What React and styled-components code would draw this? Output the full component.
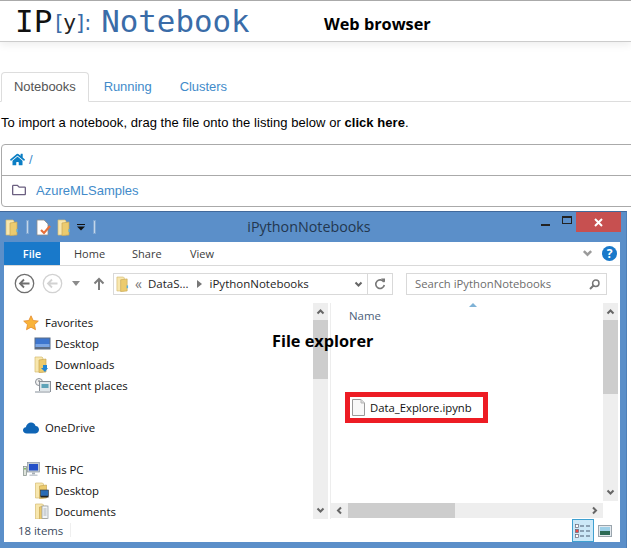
import React from 'react'
import styled, { createGlobalStyle } from 'styled-components'
import { FaHome, FaRegFolder } from 'react-icons/fa'

const GlobalStyle = createGlobalStyle`
  html, body { margin: 0; padding: 0; background: #fff; }
  body { width: 631px; height: 548px; overflow: hidden; font-family: "Liberation Sans", Arial, sans-serif; }
`

const Page = styled.div`
  position: relative;
  width: 631px;
  height: 548px;
  overflow: hidden;
`

const Annotation = styled.div`
  position: absolute;
  left: ${p => p.$left}px;
  top: ${p => p.$top}px;
  font: 700 16.3px/20px "Open Sans", sans-serif;
  color: #000;
  white-space: nowrap;
`

const Header = styled.header`
  height: 40px;
  border-top: 1px solid #aaa;
  border-bottom: 1px solid #ccc;
  box-shadow: 0 3px 8px rgba(0, 0, 0, 0.07);
  padding-left: 15px;
  display: flex;
  align-items: center;
  font-family: "DejaVu Sans Mono", monospace;
`

const LogoIp = styled.span`
  font-size: 31px;
  line-height: 40px;
  color: #111;
  margin-right: 3px;
`

const LogoBracket = styled.span`
  font-family: "DejaVu Sans", sans-serif;
  font-size: 21px;
  line-height: 40px;
  color: ${p => p.$dark ? '#222' : '#3a6ca8'};
  margin-top: 3px;
`

const LogoName = styled.span`
  font-size: 30.8px;
  line-height: 40px;
  color: #3a6ca8;
  margin-left: 10px;
`

const Tabs = styled.nav`
  margin-top: 30px;
  height: 29px;
  padding-left: 1px;
  border-bottom: 1px solid #ddd;
  display: flex;
  gap: 2px;
`

const Tab = styled.div`
  height: 28px;
  padding: 0 12px;
  font-size: 13px;
  letter-spacing: -0.06px;
  line-height: 28px;
  border: 1px solid ${p => p.$active ? '#ddd' : 'transparent'};
  border-bottom: 1px solid ${p => p.$active ? '#fff' : 'transparent'};
  border-radius: 4px 4px 0 0;
  color: ${p => p.$active ? '#555' : '#428bca'};
`

const Intro = styled.p`
  margin: 12px 0 12px;
  padding-left: 1px;
  font-size: 13px;
  letter-spacing: 0.05px;
  line-height: 18px;
  color: #000;
  b { font-weight: 700; }
`

const Listing = styled.div`
  width: 660px;
  margin-left: 1px;
  border: 1px solid #aaa;
  border-radius: 4px;
`

const ListRow = styled.div`
  height: 28px;
  padding-bottom: 2px;
  display: flex;
  align-items: center;
  padding-left: ${p => p.$folder ? 10 : 8}px;
  font-size: 13px;
  color: #428bca;
  & + & { border-top: 1px solid #aaa; }
`

const RowLabel = styled.span`
  margin-left: ${p => p.$gap}px;
`

const Window = styled.section`
  margin-top: 4px;
  width: 627px;
  height: 337px;
  box-sizing: border-box;
  background: #5b8fc9;
  border-top: 1px solid #41699b;
  border-right: 1px solid #4d7fb8;
  padding: 0 6px 6px 4px;
  display: flex;
  flex-direction: column;
`

const TitleBar = styled.div`
  height: 30px;
  flex: none;
  display: flex;
  align-items: flex-start;
`

const QuickAccess = styled.div`
  width: 100px;
  height: 30px;
  padding-left: 1px;
  box-sizing: border-box;
  display: flex;
  align-items: center;
  gap: 6px;
`

const QuickSep = styled.i`
  width: 1px;
  height: 12px;
  background: #c3d6ea;
  border: 1px solid #7ea6d2;
  margin: 0 ${p => p.$m}px;
`

const WindowTitle = styled.div`
  flex: 1;
  text-align: center;
  padding-right: 18px;
  font: 400 14.3px/30px "Open Sans", sans-serif;
  color: #23374f;
`

const WinControls = styled.div`
  display: flex;
  align-items: flex-start;
  margin-right: -1px;
`

const WinButton = styled.div`
  width: ${p => p.$w}px;
  height: 20px;
  display: flex;
  align-items: center;
  justify-content: center;
  background: ${p => p.$close ? '#c75050' : 'transparent'};
`

const Body = styled.div`
  flex: 1;
  background: #fff;
  display: flex;
  flex-direction: column;
  min-height: 0;
`

const Ribbon = styled.div`
  height: 23px;
  flex: none;
  border-bottom: 1px solid #d9d9d9;
  display: flex;
  align-items: center;
  padding-right: 3px;
  font: 400 11px/23px "Open Sans", sans-serif;
  color: #3b3b3b;
`

const FileTab = styled.div`
  width: 56px;
  height: 23px;
  margin-right: 14px;
  background: #1979ca;
  color: #fff;
  text-align: center;
  font-weight: 600;
`

const RibbonTab = styled.div`
  width: 58px;
`

const RibbonEnd = styled.div`
  margin-left: auto;
  display: flex;
  align-items: center;
  gap: 9px;
`

const HelpBadge = styled.div`
  width: 15px;
  height: 15px;
  border-radius: 50%;
  background: #1979ca;
  color: #fff;
  font: 700 12px/15px "Open Sans", sans-serif;
  text-align: center;
`

const AddressRow = styled.div`
  height: 37px;
  flex: none;
  box-sizing: border-box;
  padding: 7px 0 0 10px;
  display: flex;
  align-items: flex-start;
`

const NavButtons = styled.div`
  width: 99px;
  height: 21px;
  flex: none;
  display: flex;
  align-items: center;
`

const AddressBox = styled.div`
  width: 276px;
  height: 20px;
  flex: none;
  border: 1px solid #d9d9d9;
  display: flex;
  align-items: center;
  padding-left: 2px;
  font: 400 11.5px/20px "Open Sans", sans-serif;
  color: #1e1e1e;
`

const Crumb = styled.span`
  display: flex;
  align-items: center;
  margin-left: ${p => p.$m}px;
  font-size: ${p => p.$large ? 14 : 11.5}px;
  color: ${p => p.$muted ? '#777' : 'inherit'};
`

const AddressEnd = styled.div`
  margin-left: auto;
  height: 20px;
  display: flex;
  align-items: center;
`

const AddressCell = styled.div`
  width: ${p => p.$w}px;
  height: 20px;
  display: flex;
  align-items: center;
  justify-content: center;
  border-left: ${p => p.$line ? '1px solid #d9d9d9' : 'none'};
`

const SearchBox = styled.div`
  margin-left: 13px;
  width: 185px;
  height: 20px;
  flex: none;
  border: 1px solid #d9d9d9;
  padding: 0 6px 0 8px;
  display: flex;
  align-items: center;
  justify-content: space-between;
  font: 400 11.3px/20px "Open Sans", sans-serif;
  color: #6d6d6d;
`

const Panes = styled.div`
  height: 216px;
  flex: none;
  display: flex;
`

const NavPane = styled.div`
  width: 309px;
  flex: none;
  overflow: hidden;
  padding-top: 9px;
  box-sizing: border-box;
`

const NavRow = styled.div`
  height: 21px;
  display: flex;
  align-items: center;
  padding-left: ${p => p.$child ? 30 : 19}px;
  margin-bottom: ${p => p.$spaced ? 21 : 0}px;
  font: 400 11.4px/21px "Open Sans", sans-serif;
  color: #111;
`

const NavIcon = styled.span`
  width: ${p => p.$child ? 21 : 22}px;
  height: 16px;
  flex: none;
  display: flex;
  align-items: center;
`

const Bar = styled.div`
  flex: none;
  display: flex;
  flex-direction: ${p => p.$horizontal ? 'row' : 'column'};
  width: ${p => p.$horizontal ? 'auto' : '15px'};
  height: ${p => p.$horizontal ? '15px' : 'auto'};
  background: #eee;
`

const BarButton = styled.div`
  width: ${p => p.$horizontal ? '17px' : '15px'};
  height: ${p => p.$horizontal ? '15px' : '17px'};
  flex: none;
  display: flex;
  align-items: center;
  justify-content: center;
`

const BarThumb = styled.div`
  flex: none;
  background: #cdcdcd;
  width: ${p => p.$horizontal ? `${p.$size}px` : '15px'};
  height: ${p => p.$horizontal ? '15px' : `${p.$size}px`};
`

const BarGap = styled.div`
  flex: 1;
`

const Splitter = styled.div`
  width: 3px;
  flex: none;
  box-sizing: border-box;
  border-right: 1px solid #ededed;
`

const FilesPane = styled.div`
  flex: 1;
  display: grid;
  grid-template-columns: 272px 15px;
  grid-template-rows: 198px 2px 15px 1px;
`

const FileList = styled.div`
  overflow: hidden;
  padding-left: 14px;
`

const SortMark = styled.div`
  height: 4px;
  padding-left: 124px;
  svg { display: block; }
`

const NameHead = styled.div`
  height: 20px;
  margin-top: -1px;
  padding-left: 4px;
  font: 400 11.4px/20px "Open Sans", sans-serif;
  color: #4c607a;
`

const Highlight = styled.div`
  margin-top: 66px;
  width: 131px;
  height: 21px;
  border: 5px solid #ed1c24;
  display: flex;
  align-items: center;
  padding-left: 2px;
  font: 400 11.3px/21px "Open Sans", sans-serif;
  color: #111;
  gap: 5px;
`

const StatusBar = styled.div`
  flex: 1;
  display: flex;
  align-items: flex-start;
  padding-left: 14px;
  font: 400 11.4px/23px "Open Sans", sans-serif;
  color: #3a4a5c;
`

const StatusSep = styled.i`
  width: 1px;
  height: 14px;
  margin: 4px 0 0 7px;
  background: #efefef;
`

const ViewSwitch = styled.div`
  margin-left: auto;
  margin-right: 5px;
  display: flex;
  align-items: flex-start;
  gap: 1px;
`

const ViewButton = styled.div`
  width: ${p => p.$active ? 20 : 18}px;
  height: 21px;
  display: flex;
  align-items: center;
  justify-content: center;
  border: 1px solid ${p => p.$active ? '#3fa0d0' : 'transparent'};
  background: ${p => p.$active ? '#cce8f8' : 'transparent'};
`

const Chevron = ({ dir = 'down', color = '#666', size = 9, w = 2 }) => {
  const pts = {
    up: '1.5,6.5 4.5,3.5 7.5,6.5',
    down: '1.5,2.5 4.5,5.5 7.5,2.5',
    left: '6,1.5 3,4.5 6,7.5',
    right: '3,1.5 6,4.5 3,7.5',
  }[dir]
  return (
    <svg width={size} height={size} viewBox="0 0 9 9">
      <polyline points={pts} fill="none" stroke={color} strokeWidth={w} />
    </svg>
  )
}

const Folder = ({ w = 14, h = 17, overlay }) => (
  <svg width={w} height={h} viewBox="0 0 14 17">
    <path d="M1 1h7l1 1v14H1z" fill="#f8e7ae" stroke="#d6bb72" strokeWidth="0.7" />
    <path d="M5 4l7-1v13l-7 0.600z" fill="#eccb6e" stroke="#c9a856" strokeWidth="0.7" />
    <rect x="11.500" y="10" width="1.500" height="3" fill="#5aaede" />
    {overlay}
  </svg>
)

const DocCheck = () => (
  <svg width="15" height="17" viewBox="0 0 15 17">
    <path d="M1 1h7l4 4v11H1z" fill="#fff" stroke="#8d8d8d" strokeWidth="0.8" />
    <path d="M5 11l3 3 6-7" fill="none" stroke="#e8703a" strokeWidth="2.2" />
  </svg>
)

const Star = () => (
  <svg width="16" height="16" viewBox="0 0 16 16">
    <path d="M8 .8l2.2 4.700 5.100.600-3.800 3.500 1 5.100L8 12.200l-4.500 2.500 1-5.100L.7 6.100l5.100-.600z" fill="#f9b339" stroke="#e58a2c" strokeWidth="0.8" />
  </svg>
)

const Screen = () => (
  <svg width="17" height="13" viewBox="0 0 17 13">
    <rect x="0.500" y="0.500" width="16" height="12" fill="#5a6c85" />
    <rect x="1.500" y="1.500" width="14" height="8.500" fill="#3d76cf" />
    <rect x="1.500" y="7" width="14" height="3" fill="#7ba6e4" />
  </svg>
)

const DownloadFolder = () => (
  <Folder overlay={<path d="M9 9h4v3h1l-3 4-4-4h2z" fill="#1f86d6" />} />
)

const Recent = () => (
  <svg width="17" height="16" viewBox="0 0 17 16">
    <circle cx="5" cy="4" r="3.500" fill="#f1f1f1" stroke="#8a9098" />
    <path d="M5 2v2h2" fill="none" stroke="#555" strokeWidth="0.8" />
    <rect x="5.500" y="3.500" width="11" height="10" fill="#dfe6ea" stroke="#8a9098" />
    <rect x="7.500" y="6" width="7" height="4" fill="#5fa3b8" />
    <rect x="1" y="13" width="15" height="2" fill="#c2c7cc" />
  </svg>
)

const Cloud = () => (
  <svg width="16" height="12" viewBox="0 0 16 12">
    <path d="M4 11.500C1.500 11.500 0 10 0 8.300c0-1.700 1.200-2.800 2.800-3C3.500 2 5.800 0.500 8 0.500c2.400 0 4 1.500 4.600 3.500 2 0 3.400 1.600 3.400 3.600 0 2.200-1.500 3.900-3.500 3.900z" fill="#0f65b5" />
  </svg>
)

const Computer = () => (
  <svg width="17" height="15" viewBox="0 0 17 15">
    <rect x="0.500" y="4.500" width="3" height="9" fill="#dfe4dc" stroke="#7f8a85" strokeWidth="0.700" />
    <rect x="1.200" y="6" width="1.600" height="1.500" fill="#69b04a" />
    <rect x="4.500" y="0.500" width="12" height="9.500" fill="#c3cbd3" stroke="#8a94a0" strokeWidth="0.700" />
    <rect x="6" y="2" width="9" height="6.500" fill="#2450c8" />
    <rect x="9" y="10.500" width="3" height="2" fill="#a7afb7" />
    <rect x="6.500" y="12.500" width="8" height="1.500" fill="#c6ccd2" />
  </svg>
)

const DesktopFolder = () => (
  <Folder w={15} overlay={
    <g>
      <rect x="6" y="8" width="8" height="6" fill="#2b6cb4" stroke="#333" strokeWidth="0.600" />
      <rect x="6" y="14" width="8" height="1.500" fill="#222" />
    </g>
  } />
)

const DocumentsFolder = () => (
  <Folder w={15} overlay={
    <g>
      <rect x="7.500" y="3" width="6" height="12.500" fill="#f2f4f6" stroke="#8d949b" strokeWidth="0.700" />
      <path d="M9 6h3M9 8h3M9 10h3M9 12h3" stroke="#8d949b" strokeWidth="0.700" />
    </g>
  } />
)

const CircleArrow = ({ color, width }) => (
  <svg width="21" height="21" viewBox="0 0 21 21">
    <circle cx="10.500" cy="10.500" r="9.200" fill="#fff" stroke={color} strokeWidth={width} />
    <path d="M15.500 10.500H6.500M10 6.500l-4 4 4 4" fill="none" stroke={color} strokeWidth="1.800" />
  </svg>
)

const Caret = ({ color = '#8b8b8b' }) => (
  <svg width="8" height="5" viewBox="0 0 8 5">
    <path d="M0 0h8L4 5z" fill={color} />
  </svg>
)

const QuickMenuCaret = () => (
  <svg width="8" height="7" viewBox="0 0 8 7">
    <rect width="8" height="1" fill="#111" />
    <path d="M0 2.500h8L4 6.500z" fill="#111" />
  </svg>
)

const CrumbArrow = () => (
  <svg width="5" height="8" viewBox="0 0 5 8">
    <path d="M0 0l5 4-5 4z" fill="#777" />
  </svg>
)

const Spacer = styled.span`
  display: inline-block;
  width: ${p => p.$w}px;
  flex: none;
`

const HBarSlot = styled.div`
  grid-column: 1 / 3;
`

const ScrollBar = ({ horizontal, size }) => (
  <Bar $horizontal={horizontal}>
    <BarButton $horizontal={horizontal}><Chevron dir={horizontal ? 'left' : 'up'} /></BarButton>
    <BarThumb $horizontal={horizontal} $size={size} />
    <BarGap />
    <BarButton $horizontal={horizontal}><Chevron dir={horizontal ? 'right' : 'down'} /></BarButton>
  </Bar>
)

const navItems = [
  { label: 'Favorites', icon: <Star /> },
  { label: 'Desktop', icon: <Screen />, child: true },
  { label: 'Downloads', icon: <DownloadFolder />, child: true },
  { label: 'Recent places', icon: <Recent />, child: true, spaced: true },
  { label: 'OneDrive', icon: <Cloud />, spaced: true },
  { label: 'This PC', icon: <Computer /> },
  { label: 'Desktop', icon: <DesktopFolder />, child: true },
  { label: 'Documents', icon: <DocumentsFolder />, child: true },
]

export default function App() {
  return (
    <Page>
      <GlobalStyle />
      <Header>
        <LogoIp>IP</LogoIp>
        <LogoBracket>[</LogoBracket>
        <LogoBracket $dark>y</LogoBracket>
        <LogoBracket>]:</LogoBracket>
        <LogoName>Notebook</LogoName>
      </Header>

      <Tabs>
        <Tab $active>Notebooks</Tab>
        <Tab>Running</Tab>
        <Tab>Clusters</Tab>
      </Tabs>

      <Intro>To import a notebook, drag the file onto the listing below or <b>click here</b>.</Intro>

      <Listing>
        <ListRow>
          <FaHome size={15} color="#0b7ec4" />
          <RowLabel $gap={4}>/</RowLabel>
        </ListRow>
        <ListRow $folder>
          <FaRegFolder size={14} color="#6b5f80" />
          <RowLabel $gap={10}>AzureMLSamples</RowLabel>
        </ListRow>
      </Listing>

      <Window>
        <TitleBar>
          <QuickAccess>
            <Folder />
            <QuickSep $m={1} />
            <DocCheck />
            <Folder />
            <QuickMenuCaret />
            <QuickSep $m={2} />
          </QuickAccess>
          <WindowTitle>iPythonNotebooks</WindowTitle>
          <WinControls>
            <WinButton $w={26}>
              <svg width="9" height="16" viewBox="0 0 9 16"><rect y="10" width="9" height="2" fill="#222" /></svg>
            </WinButton>
            <WinButton $w={18}>
              <svg width="11" height="16" viewBox="0 0 11 16"><rect x="0.500" y="2.500" width="9" height="7" fill="none" stroke="#222" /><rect x="0.500" y="2" width="9" height="2" fill="#222" /></svg>
            </WinButton>
            <WinButton $w={45} $close>
              <svg width="9" height="9" viewBox="0 0 9 9"><path d="M1 1l7 7M8 1L1 8" stroke="#fff" strokeWidth="2" /></svg>
            </WinButton>
          </WinControls>
        </TitleBar>

        <Body>
          <Ribbon>
            <FileTab>File</FileTab>
            <RibbonTab>Home</RibbonTab>
            <RibbonTab>Share</RibbonTab>
            <RibbonTab>View</RibbonTab>
            <RibbonEnd>
              <Chevron color="#9a9a9a" size={11} />
              <HelpBadge>?</HelpBadge>
            </RibbonEnd>
          </Ribbon>

          <AddressRow>
            <NavButtons>
              <CircleArrow color="#6f6f6f" width={1.3} />
              <Spacer $w={7} />
              <CircleArrow color="#d2d2d2" width={1.3} />
              <Spacer $w={9} />
              <Caret />
              <Spacer $w={13} />
              <svg width="12" height="13" viewBox="0 0 12 13">
                <path d="M6 13V2M1.500 6.500L6 2l4.500 4.500" fill="none" stroke="#7d7d7d" strokeWidth="2" />
              </svg>
            </NavButtons>
            <AddressBox>
              <Folder w={13} h={16} />
              <Crumb $m={6} $muted $large>«</Crumb>
              <Crumb $m={6}>DataS...</Crumb>
              <Crumb $m={8}><CrumbArrow /></Crumb>
              <Crumb $m={8}>iPythonNotebooks</Crumb>
              <AddressEnd>
                <AddressCell $w={18}><Chevron color="#666" size={9} /></AddressCell>
                <AddressCell $w={24} $line>
                  <svg width="12" height="12" viewBox="0 0 12 12">
                    <path d="M9.800 4A4.300 4.300 0 1 0 10.300 7" fill="none" stroke="#777" strokeWidth="1.600" />
                    <path d="M7 .500h4v4z" fill="#777" />
                  </svg>
                </AddressCell>
              </AddressEnd>
            </AddressBox>
            <SearchBox>
              <span>Search iPythonNotebooks</span>
              <svg width="11" height="11" viewBox="0 0 11 11">
                <circle cx="6.800" cy="4.200" r="3.200" fill="none" stroke="#777" strokeWidth="1.500" />
                <path d="M4.500 6.500L1 10" stroke="#777" strokeWidth="2" />
              </svg>
            </SearchBox>
          </AddressRow>

          <Panes>
            <NavPane>
              {navItems.map((item, i) => (
                <NavRow key={i} $child={item.child} $spaced={item.spaced}>
                  <NavIcon $child={item.child}>{item.icon}</NavIcon>
                  {item.label}
                </NavRow>
              ))}
            </NavPane>
            <ScrollBar size={59} />
            <Splitter />
            <FilesPane>
              <FileList>
                <SortMark>
                  <svg width="8" height="4" viewBox="0 0 8 4"><path d="M0 4L4 0l4 4z" fill="#7fb2d6" /></svg>
                </SortMark>
                <NameHead>Name</NameHead>
                <Highlight>
                  <svg width="13" height="17" viewBox="0 0 13 17">
                    <path d="M.500.500h8.500l3.500 3.500v12.500H.500z" fill="#f8f8f8" stroke="#9a9a9a" />
                    <path d="M9 .500V4h3.500" fill="#dcdcdc" stroke="#b5b5b5" />
                  </svg>
                  Data_Explore.ipynb
                </Highlight>
              </FileList>
              <ScrollBar size={74} />
              <HBarSlot />
              <ScrollBar horizontal size={107} />
            </FilesPane>
          </Panes>

          <StatusBar>
            18 items
            <StatusSep />
            <ViewSwitch>
              <ViewButton $active>
                <svg width="16" height="14" viewBox="0 0 16 14">
                  <rect x="0.500" y="0.500" width="3" height="3" fill="#fff" stroke="#667" strokeWidth="0.700" />
                  <rect x="0.500" y="5.500" width="3" height="3" fill="#e44" stroke="#667" strokeWidth="0.700" />
                  <rect x="0.500" y="10.500" width="3" height="3" fill="#fff" stroke="#667" strokeWidth="0.700" />
                  <path d="M5 2h4M11 2h4M5 7h4M11 7h4M5 12h4M11 12h4" stroke="#4a5a70" />
                </svg>
              </ViewButton>
              <ViewButton>
                <svg width="14" height="12" viewBox="0 0 14 12">
                  <rect x="0.500" y="0.500" width="13" height="11" fill="#e3e9ee" stroke="#9aa5ad" />
                  <rect x="2" y="2" width="10" height="4" fill="#9ed0e8" />
                  <rect x="2" y="6" width="10" height="4" fill="#2d6a55" />
                </svg>
              </ViewButton>
            </ViewSwitch>
          </StatusBar>
        </Body>
      </Window>

      <Annotation $left={324} $top={14}>Web browser</Annotation>
      <Annotation $left={272} $top={331}>File explorer</Annotation>
    </Page>
  )
}
